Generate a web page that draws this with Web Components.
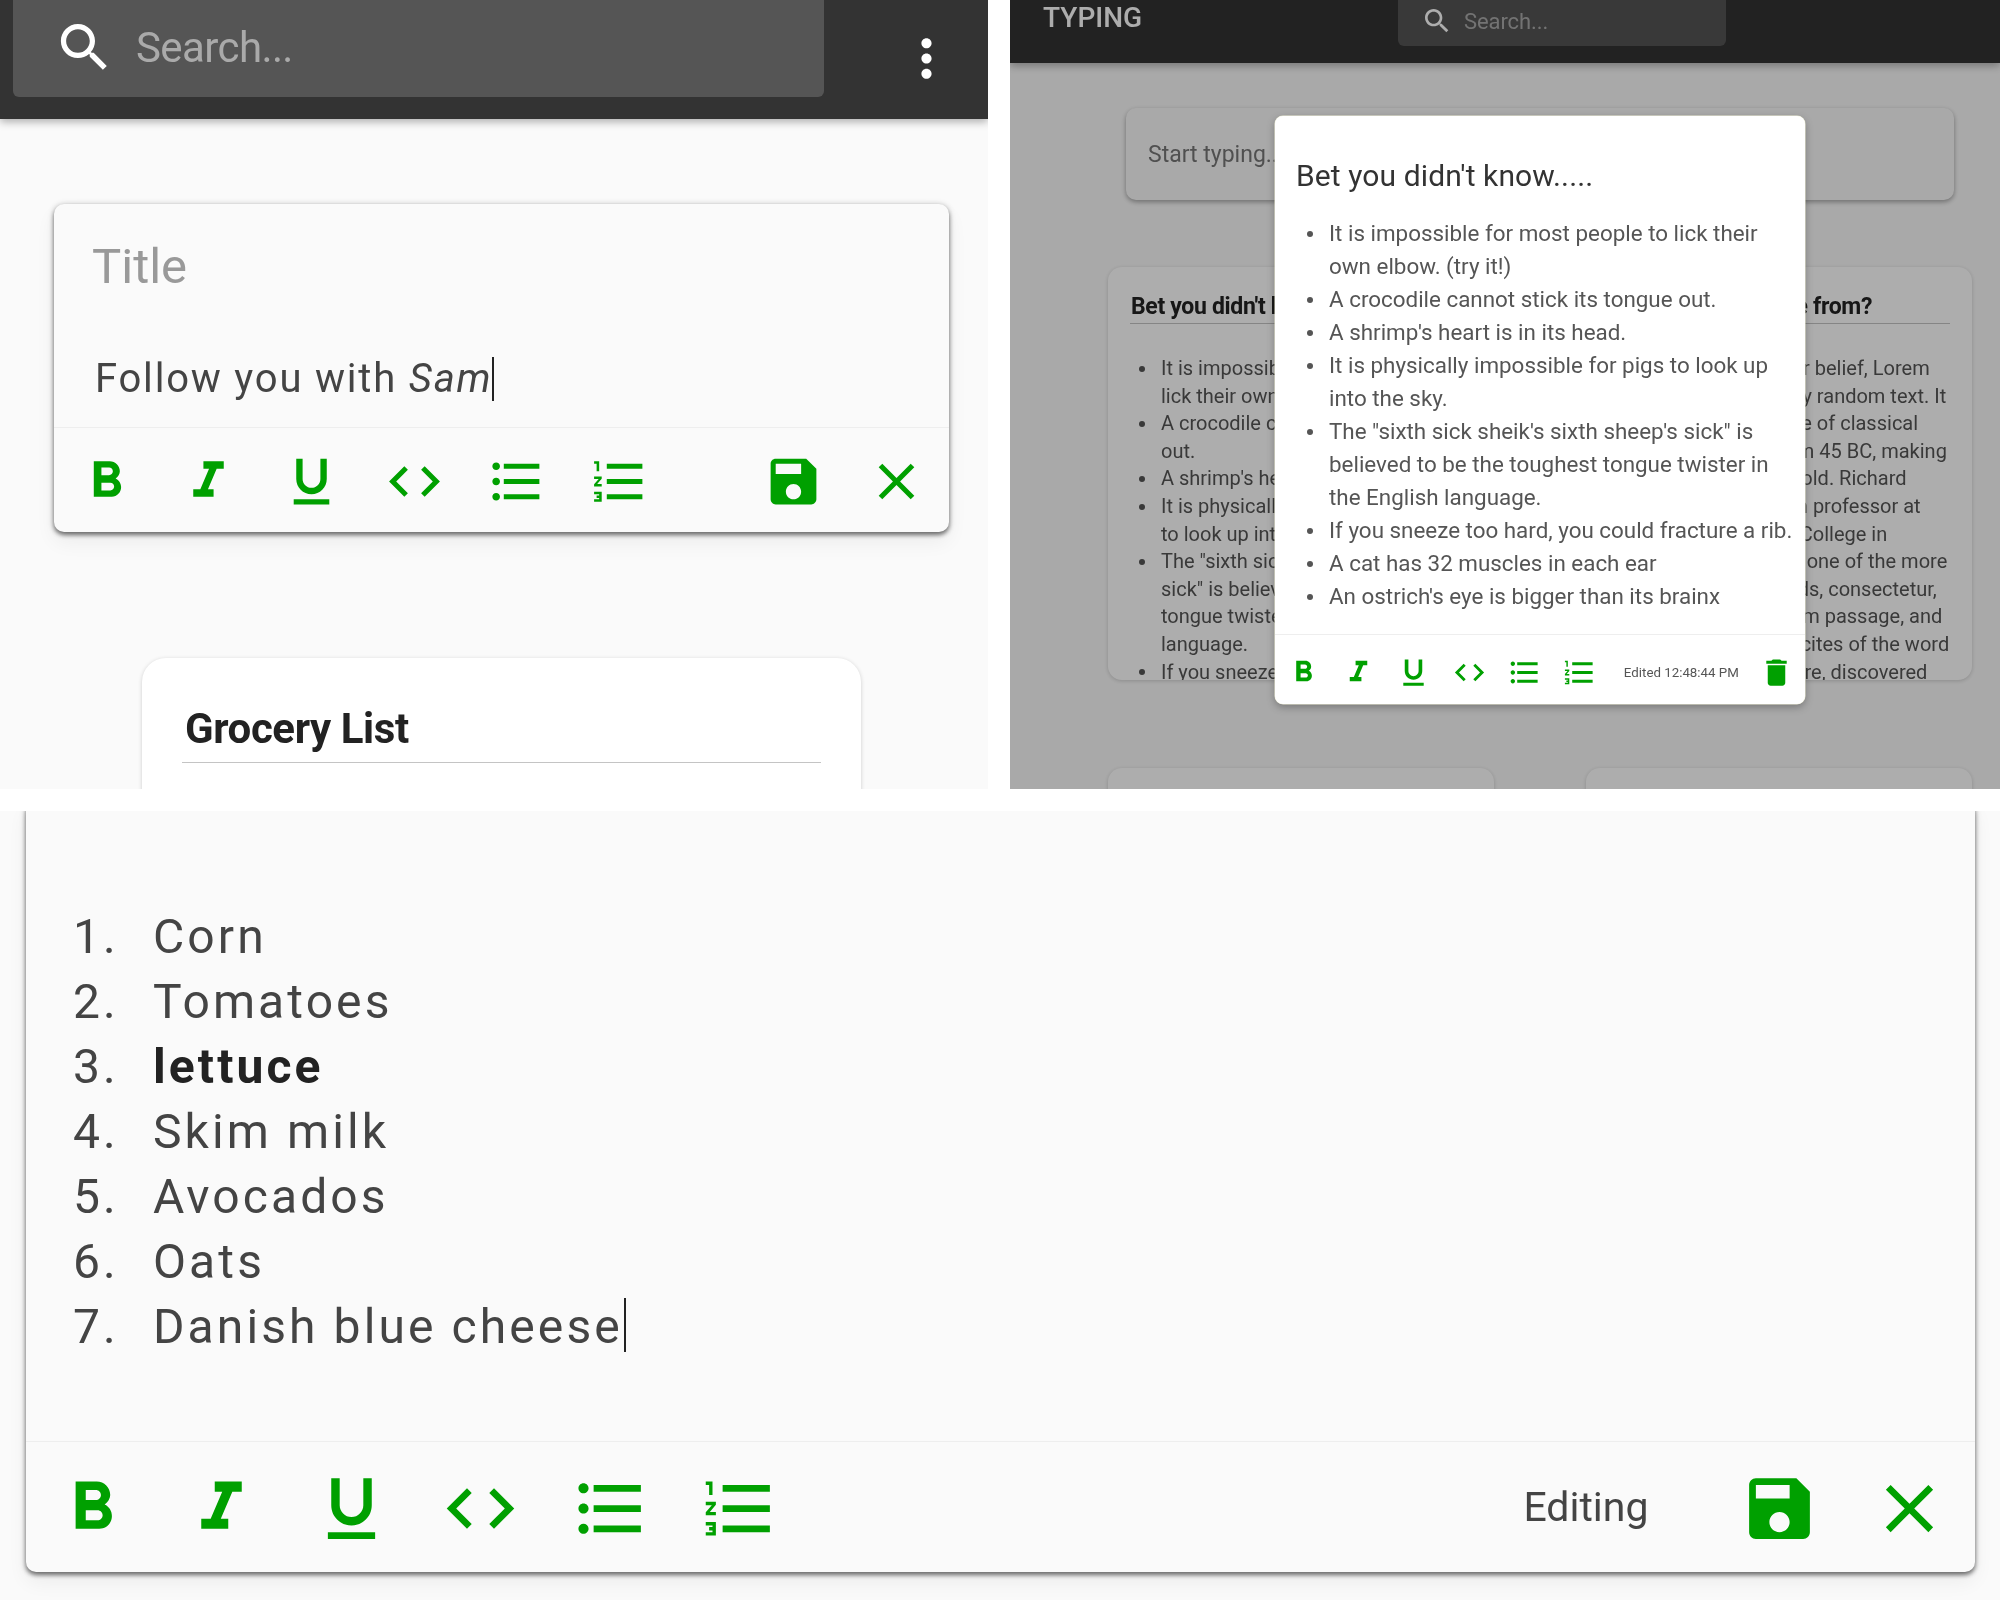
<!doctype html>
<html>
<head>
<meta charset="utf-8">
<title>Notes</title>
<style>
  html, body { margin: 0; background: #fff; }
  body { font-family: Roboto, "Liberation Sans", sans-serif; width: 2000px; height: 1600px; overflow: hidden; }
</style>
</head>
<body>
<collage-sheet>

  <!-- phone view, new note -->
  <app-panel style="width: 988px; height: 789px">
    <app-bar style="--bar-height: 119px; --bar-color: #333">
      <search-box style="--box-width: 811px; --box-height: 99px; --box-left: 13px; --box-top: -2px; --icon-size: 63px; --pad: 40px; --gap: 20px; --search-font: 42px; --search-space: -.6px"></search-box>
      <tool-icon name="more" style="--icon-size: 61px; --icon-color: #fff; margin: -2px 0 0 72px"></tool-icon>
    </app-bar>
    <edit-card style="width: 895px; margin: 85px 0 0 54px; --body-height: 223px; --bar-h: 105px; --radius: 10px">
      <div slot="body" style="padding: 37px 38px 0">
        <div style="font-size: 49px; line-height: 52px; color: #999">Title</div>
        <div style="font-size: 40px; line-height: 48px; color: #444; letter-spacing: 1.8px; margin: 62px 0 0 3px">Follow you with <i>Sam</i><text-caret style="--caret-h: 44px; margin-left: 0"></text-caret></div>
      </div>
      <edit-toolbar slot="toolbar" style="--tool-size: 61px; --tool-gap: 41.7px; --bar-pad: 21.5px; --bar-pad-r: 22.5px; --bar-top: 2px; --tool-h: 105px" action="save" end="close"></edit-toolbar>
    </edit-card>
    <div style="height: 126px"></div>
    <view-card heading="Grocery List" style="width: 719px; margin-left: 142px; height: 300px; --pad-x: 40px; --pad-top: 45px; --head-font: 42px; --head-line: 52px; --rule-gap: 7px; --head-indent: 3px; --head-space: -.4px; --card-radius: 24px"></view-card>
  </app-panel>

  <!-- desktop view, dialog open -->
  <app-panel style="width: 990px; height: 789px">
    <app-bar style="--bar-height: 63px; --bar-color: #333">
      <span style="font-size: 28px; line-height: 34px; font-weight: 500; color: #fff; margin: -28px 0 0 33px; width: 355px">TYPING</span>
      <search-box style="--box-width: 328px; --box-height: 50px; --box-top: -4px; --icon-size: 32px; --pad: 23px; --gap: 11px; --search-font: 22px; --search-space: -.1px"></search-box>
    </app-bar>
    <start-card>Start typing...</start-card>
    <card-grid>
      <view-card heading="Bet you didn't know....." style="--items-right: -5px">
        <bullet-item>It is impossible for most people to lick their own elbow. (try it!)</bullet-item>
        <bullet-item>A crocodile cannot stick its tongue out.</bullet-item>
        <bullet-item>A shrimp's heart is in its head.</bullet-item>
        <bullet-item>It is physically impossible for pigs to look up into the sky.</bullet-item>
        <bullet-item>The "sixth sick sheik's sixth sheep's sick" is believed to be the toughest tongue twister in the English language.</bullet-item>
        <bullet-item>If you sneeze too hard, you could fracture a rib.</bullet-item>
      </view-card>
      <view-card heading="Where does it come from?">
        <bullet-item>Contrary to popular belief, Lorem Ipsum is not simply random text. It has roots in a piece of classical Latin literature from 45 BC, making it over 2000 years old. Richard McClintock, a Latin professor at Hampden-Sydney College in Virginia, looked up one of the more obscure Latin words, consectetur, from a Lorem Ipsum passage, and going through the cites of the word in classical literature, discovered</bullet-item>
      </view-card>
      <view-card></view-card>
      <view-card></view-card>
    </card-grid>
    <scrim-layer></scrim-layer>
    <note-dialog heading="Bet you didn't know.....">
      <bullet-item>It is impossible for most people to lick their own elbow. (try it!)</bullet-item>
      <bullet-item>A crocodile cannot stick its tongue out.</bullet-item>
      <bullet-item>A shrimp's heart is in its head.</bullet-item>
      <bullet-item>It is physically impossible for pigs to look up into the sky.</bullet-item>
      <bullet-item>The "sixth sick sheik's sixth sheep's sick" is believed to be the toughest tongue twister in the English language.</bullet-item>
      <bullet-item>If you sneeze too hard, you could fracture a rib.</bullet-item>
      <bullet-item>A cat has 32 muscles in each ear</bullet-item>
      <bullet-item>An ostrich's eye is bigger than its brainx</bullet-item>
    </note-dialog>
  </app-panel>

  <!-- zoomed editor -->
  <app-panel style="width: 2000px; height: 789px; grid-column: 1 / 3">
    <edit-card style="width: 1949px; margin: -10px 0 0 26px; --body-height: 640px; --bar-h: 131px; --radius: 10px">
      <div slot="body" style="padding: 103px 0 0 47px; font-size: 48px; line-height: 65px; color: #444; letter-spacing: 3.1px">
        <num-item n="1">Corn</num-item>
        <num-item n="2">Tomatoes</num-item>
        <num-item n="3"><b style="color: #222; font-weight: 700">lettuce</b></num-item>
        <num-item n="4">Skim milk</num-item>
        <num-item n="5">Avocados</num-item>
        <num-item n="6">Oats</num-item>
        <num-item n="7">Danish blue cheese<text-caret style="--caret-h: 54px"></text-caret></num-item>
      </div>
      <edit-toolbar slot="toolbar" style="--tool-size: 81px; --tool-gap: 48.5px; --bar-pad: 25.5px; --bar-top: 2px; --tool-h: 131px; --status-font: 41px; --status-color: #444; --status-after: 42px; --status-lift: 2px" action="save" end="close" status="Editing"></edit-toolbar>
    </edit-card>
  </app-panel>

</collage-sheet>

<script>
const iconPaths = {
  bold: 'M15.6 10.79c.97-.67 1.65-1.77 1.65-2.79 0-2.26-1.75-4-4-4H7v14h7.04c2.09 0 3.71-1.7 3.71-3.79 0-1.52-.86-2.82-2.15-3.42zM10 6.5h3c.83 0 1.5.67 1.5 1.5s-.67 1.5-1.5 1.5h-3v-3zm3.5 9H10v-3h3.5c.83 0 1.5.67 1.5 1.5s-.67 1.5-1.5 1.5z',
  italic: 'M10 4v3h2.21l-3.42 8H6v3h8v-3h-2.21l3.42-8H18V4z',
  underline: 'M12 17c3.31 0 6-2.69 6-6V3h-2.5v8c0 1.93-1.57 3.5-3.5 3.5S8.5 12.93 8.5 11V3H6v8c0 3.31 2.69 6 6 6zm-7 2v2h14v-2H5z',
  code: 'M9.4 16.6L4.8 12l4.6-4.6L8 6l-6 6 6 6 1.4-1.4zm5.2 0l4.6-4.6-4.6-4.6L16 6l6 6-6 6-1.4-1.4z',
  bullets: 'M4 10.5c-.83 0-1.5.67-1.5 1.5s.67 1.5 1.5 1.5 1.5-.67 1.5-1.5-.67-1.5-1.5-1.5zm0-6c-.83 0-1.5.67-1.5 1.5S3.17 7.5 4 7.5 5.5 6.83 5.5 6 4.83 4.5 4 4.5zm0 12c-.83 0-1.5.68-1.5 1.5s.68 1.5 1.5 1.5 1.5-.68 1.5-1.5-.67-1.5-1.5-1.5zM7 19h14v-2H7v2zm0-6h14v-2H7v2zm0-8v2h14V5H7z',
  numbers: 'M2 17h2v.5H3v1h1v.5H2v1h3v-4H2v1zm1-9h1V4H2v1h1v3zm-1 3h1.8L2 13.1v.9h3v-1H3.2L5 10.9V10H2v1zm5-6v2h14V5H7zm0 14h14v-2H7v2zm0-6h14v-2H7v2z',
  save: 'M17 3H5c-1.11 0-2 .9-2 2v14c0 1.1.89 2 2 2h14c1.1 0 2-.9 2-2V7l-4-4zm-5 16c-1.66 0-3-1.34-3-3s1.34-3 3-3 3 1.34 3 3-1.34 3-3 3zm3-10H5V5h10v4z',
  close: 'M19 6.41L17.59 5 12 10.59 6.41 5 5 6.41 10.59 12 5 17.59 6.41 19 12 13.41 17.59 19 19 17.59 13.41 12z',
  trash: 'M6 19c0 1.1.9 2 2 2h8c1.1 0 2-.9 2-2V7H6v12zM19 4h-3.5l-1-1h-5l-1 1H5v2h14V4z',
  search: 'M15.5 14h-.79l-.28-.27C15.41 12.59 16 11.11 16 9.5 16 5.91 13.09 3 9.5 3S3 5.91 3 9.5 5.91 16 9.5 16c1.61 0 3.09-.59 4.23-1.57l.27.28v.79l5 4.99L20.49 19l-4.99-5zm-6 0C7.01 14 5 11.99 5 9.5S7.01 5 9.5 5 14 7.01 14 9.5 11.99 14 9.5 14z',
  more: 'M12 8c1.1 0 2-.9 2-2s-.9-2-2-2-2 .9-2 2 .9 2 2 2zm0 2c-1.1 0-2 .9-2 2s.9 2 2 2 2-.9 2-2-.9-2-2-2zm0 6c-1.1 0-2 .9-2 2s.9 2 2 2 2-.9 2-2-.9-2-2-2z',
}

// small helper so each element below stays a couple of lines
function define(tag, html, setup) {
  customElements.define(tag, class extends HTMLElement {
    constructor() {
      super()
      this.attachShadow({ mode: 'open' }).innerHTML = html
    }
    connectedCallback() {
      if (setup) setup(this, this.shadowRoot)
    }
  })
}

define('collage-sheet', `
  <style>
    :host { display: grid; grid-template-columns: 988px 990px; column-gap: 22px; row-gap: 22px; }
  </style>
  <slot></slot>
`)

define('app-panel', `
  <style>
    :host { display: block; position: relative; overflow: hidden; background: #fafafa; filter: blur(.55px); }
  </style>
  <slot></slot>
`)

define('app-bar', `
  <style>
    :host {
      display: flex;
      align-items: center;
      height: var(--bar-height);
      background: var(--bar-color);
      box-shadow: 0 3px 8px rgba(0, 0, 0, .3);
      position: relative;
    }
  </style>
  <slot></slot>
`)

define('tool-icon', `
  <style>
    :host { display: block; flex: none; width: var(--icon-size); height: var(--icon-size); }
    svg { display: block; width: 100%; height: 100%; fill: var(--icon-color, #00a000); }
  </style>
  <svg viewBox="0 0 24 24"><path></path></svg>
`, (host, root) => {
  root.querySelector('path').setAttribute('d', iconPaths[host.getAttribute('name')])
})

define('search-box', `
  <style>
    :host {
      display: flex;
      align-items: center;
      gap: var(--gap);
      flex: none;
      box-sizing: border-box;
      width: var(--box-width);
      height: var(--box-height);
      margin: var(--box-top) 0 0 var(--box-left, 0);
      padding-left: var(--pad);
      align-self: flex-start;
      background: #555;
      border-radius: 0 0 6px 6px;
      font-size: var(--search-font);
      letter-spacing: var(--search-space);
      color: #aaa;
    }
    tool-icon { --icon-color: #fff; }
  </style>
  <tool-icon name="search"></tool-icon>
  <span>Search...</span>
`)

define('text-caret', `
  <style>
    :host {
      display: inline-block;
      width: 2px;
      height: var(--caret-h);
      margin-left: 1px;
      background: #222;
      vertical-align: -9px;
    }
  </style>
`)

define('edit-toolbar', `
  <style>
    :host {
      display: flex;
      align-items: center;
      gap: var(--tool-gap);
      height: var(--tool-h);
      box-sizing: border-box;
      padding: var(--bar-top, 0) var(--bar-pad-r, var(--bar-pad)) 0 var(--bar-pad);
      border-top: 1px solid #eee;
    }
    tool-icon { --icon-size: var(--tool-size); }
    .spacer { flex: 1; margin-right: calc(var(--tool-gap) * -1); }
    .status {
      font-size: var(--status-font);
      color: var(--status-color);
      margin: 0 var(--status-after, 0) var(--status-lift, 0) 0;
      white-space: nowrap;
    }
  </style>
`, (host, root) => {
  const names = ['bold', 'italic', 'underline', 'code', 'bullets', 'numbers']
  const icons = names.map(name => `<tool-icon name="${name}"></tool-icon>`).join('')
  const status = host.getAttribute('status')
  const end = host.getAttribute('end')
  root.innerHTML += `${icons}<span class="spacer"></span>`
    + (status ? `<span class="status">${status}</span>` : '')
    + `<tool-icon name="${host.getAttribute('action')}"></tool-icon>`
    + (end ? `<tool-icon name="${end}"></tool-icon>` : '')
})

define('edit-card', `
  <style>
    :host {
      display: block;
      background: #fafafa;
      border-radius: var(--radius);
      box-shadow: 0 3px 4px rgba(0, 0, 0, .45), 0 1px 6px rgba(0, 0, 0, .25), 0 10px 20px rgba(0, 0, 0, .06);
    }
    .body { height: var(--body-height); overflow: hidden; }
  </style>
  <div class="body"><slot name="body"></slot></div>
  <slot name="toolbar"></slot>
`)

define('view-card', `
  <style>
    :host {
      display: block;
      box-sizing: border-box;
      height: 413px;
      overflow: hidden;
      background: #fff;
      border-radius: var(--card-radius, 14px);
      padding: var(--pad-top, 24px) var(--pad-x, 22px) 0;
      box-shadow: 0 1px 4px rgba(0, 0, 0, .18);
    }
    h3 {
      margin: 0 0 31px;
      font-size: var(--head-font, 23px);
      line-height: var(--head-line, 32px);
      letter-spacing: var(--head-space, -.33px);
      text-indent: var(--head-indent, 1px);
      font-weight: 700;
      color: #222;
      padding-bottom: var(--rule-gap, 0);
      border-bottom: 1px solid #c4c4c4;
    }
    h3:empty { display: none; }
    .items { font-size: 20px; line-height: 27.6px; color: #555; margin-right: var(--items-right, 0); --bullet-left: 9px; --bullet-text: 31px; }
  </style>
  <h3></h3>
  <div class="items"><slot></slot></div>
`, (host, root) => {
  root.querySelector('h3').textContent = host.getAttribute('heading') || ''
})

define('card-grid', `
  <style>
    :host {
      display: grid;
      grid-template-columns: 386px 386px;
      column-gap: 92px;
      row-gap: 88px;
      margin: 67px 0 0 98px;
    }
  </style>
  <slot></slot>
`)

define('start-card', `
  <style>
    :host {
      display: flex;
      align-items: center;
      box-sizing: border-box;
      width: 828px;
      height: 92px;
      margin: 45px 0 0 116px;
      padding-left: 22px;
      background: #fafafa;
      border-radius: 10px;
      box-shadow: 0 2px 5px rgba(0, 0, 0, .35);
      font-size: 23px;
      color: #777;
    }
  </style>
  <slot></slot>
`)

define('scrim-layer', `
  <style>
    :host { position: absolute; inset: 0; background: rgba(0, 0, 0, .32); }
  </style>
`)

define('note-dialog', `
  <style>
    :host {
      position: absolute;
      left: 265px;
      top: 116px;
      width: 530px;
      height: 588px;
      display: flex;
      flex-direction: column;
      background: #fff;
      border-radius: 8px;
      box-shadow: 0 0 0 .5px #eeeed6, 0 3px 8px rgba(0, 0, 0, .3);
    }
    .main { flex: 1; padding: 40px 0 0 21px; }
    h2 { margin: 0 0 21px; font-size: 30px; line-height: 40px; font-weight: 400; color: #333; letter-spacing: .1px; }
    .items { font-size: 22.4px; line-height: 33px; color: #555; --bullet-left: 11px; --bullet-text: 33px; }
    edit-toolbar {
      --tool-size: 35px;
      --tool-gap: 20.2px;
      --bar-pad: 11px;
      --bar-top: 5px;
      --tool-h: 70px;
      --status-font: 13.3px;
      --status-color: #555;
    }
  </style>
  <div class="main">
    <h2></h2>
    <div class="items"><slot></slot></div>
  </div>
  <edit-toolbar action="trash" status="Edited 12:48:44 PM"></edit-toolbar>
`, (host, root) => {
  root.querySelector('h2').textContent = host.getAttribute('heading')
})

define('bullet-item', `
  <style>
    :host {
      display: block;
      position: relative;
      padding-left: var(--bullet-text, 53px);
    }
    .dot {
      position: absolute;
      left: var(--bullet-left, 34px);
      top: calc(.5lh - 3px);
      width: 6px;
      height: 6px;
      border-radius: 50%;
      background: currentColor;
    }
  </style>
  <span class="dot"></span><slot></slot>
`)

define('num-item', `
  <style>
    :host { display: flex; }
    .n { flex: none; width: 80px; }
  </style>
  <span class="n"></span><span><slot></slot></span>
`, (host, root) => {
  root.querySelector('.n').textContent = host.getAttribute('n') + '.'
})
</script>
</body>
</html>
